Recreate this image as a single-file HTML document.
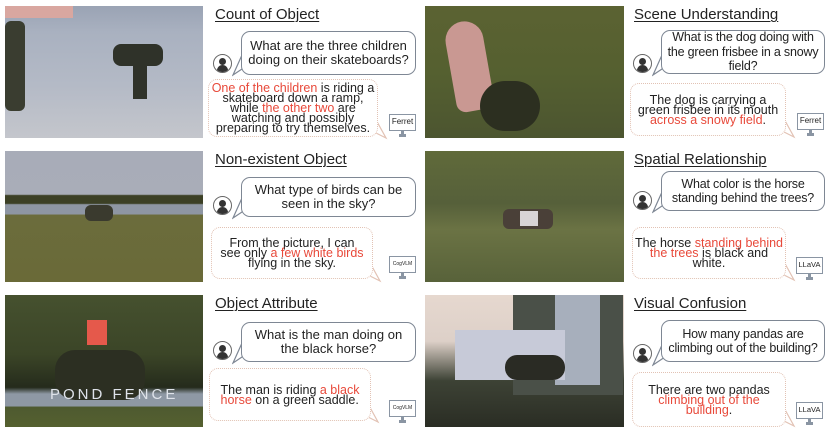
<!DOCTYPE html><html><head><meta charset="utf-8"><style>
body{margin:0;width:830px;height:433px;background:#fff;position:relative;overflow:hidden;font-family:"Liberation Sans",sans-serif;color:#222}
.a{position:absolute}
.t{font-size:15px;text-decoration:underline;text-underline-offset:2px;text-decoration-thickness:1px;color:#222;white-space:nowrap}
.q{border:1.3px solid #7e8794;border-radius:9px;font-size:13px;line-height:14.5px;text-align:center;display:flex;align-items:center;justify-content:center;box-sizing:border-box;background:#fff;white-space:nowrap}
.qr{font-size:12.5px;letter-spacing:-0.2px}
.r{border:1.3px dotted #e2c2b4;border-radius:9px;font-size:12.5px;line-height:10px;text-align:center;display:flex;align-items:center;justify-content:center;box-sizing:border-box;background:#fff;white-space:nowrap}
.red{color:#e8493a}
.av{width:19px;height:19px;border:1.3px solid #666;border-radius:50%;box-sizing:border-box;overflow:hidden}
.av:before{content:"";position:absolute;left:5px;top:3px;width:7px;height:7px;border-radius:50%;background:#333}
.av:after{content:"";position:absolute;left:3px;top:10px;width:11px;height:8px;border-radius:6px 6px 0 0;background:#333}
.mon{width:27px;height:17px;border:1.5px solid #8a95a3;box-sizing:border-box;font-size:8px;line-height:14px;text-align:center;background:#fff}
.mon:after{content:"";position:absolute;left:11px;top:16px;width:3px;height:3px;background:#8a95a3;box-shadow:-2px 3px 0 0 #8a95a3,2px 3px 0 0 #8a95a3,0 3px 0 0 #8a95a3}
.ph{overflow:hidden}
</style></head><body>

<div class="a ph" style="left:5px;top:6px;width:198px;height:132px;background:linear-gradient(180deg,#9aa3b4 0,#a9b1c0 20%,#b4bac6 60%,#c4c6cc 100%)">
<div class="a" style="left:0;top:0;width:68px;height:12px;background:#d9a7a0"></div>
<div class="a" style="left:0;top:15px;width:20px;height:90px;background:#3a3d30;border-radius:6px"></div>
<div class="a" style="left:108px;top:38px;width:50px;height:22px;background:#2f3229;border-radius:8px"></div>
<div class="a" style="left:128px;top:55px;width:14px;height:38px;background:#2f3229"></div>
</div>
<div class="a ph" style="left:5px;top:151px;width:198px;height:131px;background:linear-gradient(180deg,#a8acb8 0,#a9adb8 33%,#3c4025 34%,#3c4025 40%,#8e96a3 41%,#8e96a3 48%,#6b6c3c 49%,#6a6a38 100%)">
<div class="a" style="left:80px;top:54px;width:28px;height:16px;background:#3a3a2e;border-radius:6px"></div>
</div>
<div class="a ph" style="left:5px;top:295px;width:198px;height:132px;background:linear-gradient(180deg,#46512f 0,#3b4527 45%,#252b1c 70%,#8e98a4 75%,#8e98a4 84%,#4e5a30 85%,#55602f 100%)">
<div class="a" style="left:50px;top:55px;width:90px;height:50px;background:#2c2f22;border-radius:20px"></div>
<div class="a" style="left:82px;top:25px;width:20px;height:25px;background:#e5594b"></div>
<div class="a" style="left:45px;top:91px;color:#dfe3ea;font-size:15px;letter-spacing:3px;white-space:nowrap">POND FENCE</div>
</div>
<div class="a ph" style="left:425px;top:6px;width:199px;height:132px;background:linear-gradient(180deg,#5b6232 0,#556030 50%,#4c5530 100%)">
<div class="a" style="left:25px;top:15px;width:38px;height:90px;background:#c99892;border-radius:20px 20px 10px 10px;transform:rotate(-10deg)"></div>
<div class="a" style="left:55px;top:75px;width:60px;height:50px;background:#2c2f20;border-radius:30px"></div>
</div>
<div class="a ph" style="left:425px;top:151px;width:199px;height:131px;background:linear-gradient(180deg,#606a3a 0,#56603a 40%,#6b7344 60%,#58623a 100%)">
<div class="a" style="left:78px;top:58px;width:50px;height:20px;background:#4a4038;border-radius:6px"></div>
<div class="a" style="left:95px;top:60px;width:18px;height:15px;background:#d8d4d6"></div>
</div>
<div class="a ph" style="left:425px;top:295px;width:199px;height:132px;background:linear-gradient(180deg,#e6d8cf 0,#ddd0c8 35%,#3d4235 65%,#2a2d24 100%)">
<div class="a" style="left:88px;top:0;width:110px;height:100px;background:#4a5048"></div>
<div class="a" style="left:130px;top:0;width:45px;height:90px;background:#a7afbc"></div>
<div class="a" style="left:30px;top:35px;width:110px;height:50px;background:#c7cad8"></div>
<div class="a" style="left:80px;top:60px;width:60px;height:25px;background:#2a2b24;border-radius:12px"></div>
</div>

<div class="a t" style="left:215px;top:6px">Count of Object</div>
<div class="a av" style="left:213px;top:54px"></div>
<svg class="a" style="left:232px;top:55px" width="14" height="22"><path d="M10 0 L1 20 L13 12" fill="#fff" stroke="#7e8794" stroke-width="1.2"/></svg>
<div class="a q" style="left:241px;top:31px;width:175px;height:44px">What are the three children<br>doing on their skateboards?</div>
<svg class="a" style="left:374px;top:118px" width="14" height="22"><path d="M1 0 L12 20 L0 14" fill="#fff" stroke="#e2c2b4" stroke-width="1.2"/></svg>
<div class="a r" style="left:208px;top:79px;width:170px;height:58px"><div><span class="red">One of the children</span> is riding a<br>skateboard down a ramp,<br>while <span class="red">the other two</span> are<br>watching and possibly<br>preparing to try themselves.</div></div>
<div class="a mon" style="left:389px;top:114px">Ferret</div>

<div class="a t" style="left:215px;top:151px">Non-existent Object</div>
<div class="a av" style="left:213px;top:196px"></div>
<svg class="a" style="left:232px;top:198px" width="14" height="22"><path d="M10 0 L1 20 L13 12" fill="#fff" stroke="#7e8794" stroke-width="1.2"/></svg>
<div class="a q" style="left:241px;top:177px;width:175px;height:40px">What type of birds can be<br>seen in the sky?</div>
<svg class="a" style="left:368px;top:261px" width="14" height="22"><path d="M1 0 L12 20 L0 14" fill="#fff" stroke="#e2c2b4" stroke-width="1.2"/></svg>
<div class="a r" style="left:211px;top:227px;width:162px;height:52px"><div>From the picture, I can<br>see only <span class="red">a few white birds</span><br>flying in the sky.</div></div>
<div class="a mon" style="left:389px;top:256px;font-size:5px">CogVLM</div>

<div class="a t" style="left:215px;top:295px">Object Attribute</div>
<div class="a av" style="left:213px;top:341px"></div>
<svg class="a" style="left:232px;top:343px" width="14" height="22"><path d="M10 0 L1 20 L13 12" fill="#fff" stroke="#7e8794" stroke-width="1.2"/></svg>
<div class="a q" style="left:241px;top:322px;width:175px;height:40px">What is the man doing on<br>the black horse?</div>
<svg class="a" style="left:366px;top:402px" width="14" height="22"><path d="M1 0 L12 20 L0 14" fill="#fff" stroke="#e2c2b4" stroke-width="1.2"/></svg>
<div class="a r" style="left:209px;top:368px;width:162px;height:53px"><div style="text-align:left">The man is riding <span class="red">a black<br>horse</span> on a green saddle.</div></div>
<div class="a mon" style="left:389px;top:400px;font-size:5px">CogVLM</div>

<div class="a t" style="left:634px;top:6px">Scene Understanding</div>
<div class="a av" style="left:633px;top:54px"></div>
<svg class="a" style="left:652px;top:55px" width="14" height="22"><path d="M10 0 L1 20 L13 12" fill="#fff" stroke="#7e8794" stroke-width="1.2"/></svg>
<div class="a q qr" style="left:661px;top:30px;width:164px;height:44px">What is the dog doing with<br>the green frisbee in a snowy<br>field?</div>
<svg class="a" style="left:782px;top:117px" width="14" height="22"><path d="M1 0 L12 20 L0 14" fill="#fff" stroke="#e2c2b4" stroke-width="1.2"/></svg>
<div class="a r" style="left:630px;top:83px;width:156px;height:53px"><div>The dog is carrying a<br>green frisbee in its mouth<br><span class="red">across a snowy field</span>.</div></div>
<div class="a mon" style="left:797px;top:113px">Ferret</div>

<div class="a t" style="left:634px;top:151px">Spatial Relationship</div>
<div class="a av" style="left:633px;top:191px"></div>
<svg class="a" style="left:652px;top:192px" width="14" height="22"><path d="M10 0 L1 20 L13 12" fill="#fff" stroke="#7e8794" stroke-width="1.2"/></svg>
<div class="a q qr" style="left:661px;top:171px;width:164px;height:40px">What color is the horse<br>standing behind the trees?</div>
<svg class="a" style="left:782px;top:260px" width="14" height="22"><path d="M1 0 L12 20 L0 14" fill="#fff" stroke="#e2c2b4" stroke-width="1.2"/></svg>
<div class="a r" style="left:632px;top:227px;width:154px;height:52px"><div>The horse <span class="red">standing behind<br>the trees</span> is black and<br>white.</div></div>
<div class="a mon" style="left:796px;top:257px;font-size:7.5px">LLaVA</div>

<div class="a t" style="left:634px;top:295px">Visual Confusion</div>
<div class="a av" style="left:633px;top:344px"></div>
<svg class="a" style="left:652px;top:345px" width="14" height="22"><path d="M10 0 L1 20 L13 12" fill="#fff" stroke="#7e8794" stroke-width="1.2"/></svg>
<div class="a q qr" style="left:661px;top:320px;width:164px;height:42px">How many pandas are<br>climbing out of the building?</div>
<svg class="a" style="left:782px;top:406px" width="14" height="22"><path d="M1 0 L12 20 L0 14" fill="#fff" stroke="#e2c2b4" stroke-width="1.2"/></svg>
<div class="a r" style="left:632px;top:372px;width:154px;height:55px"><div>There are two pandas<br><span class="red">climbing out of the<br>building</span>.</div></div>
<div class="a mon" style="left:796px;top:402px;font-size:7.5px">LLaVA</div>
</body></html>
